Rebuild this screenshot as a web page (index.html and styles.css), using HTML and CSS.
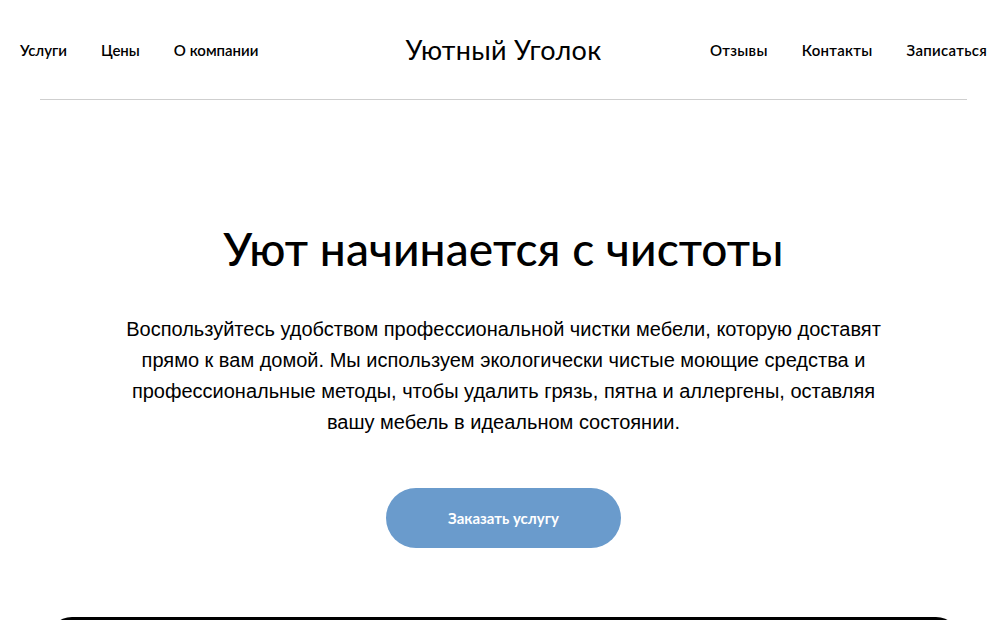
FILE: index.html
```html
<!DOCTYPE html>
<html lang="ru">

<head>
  <meta charset="UTF-8">
  <meta name="viewport" content="width=device-width, initial-scale=1.0">
  <title>Уютный Уголок | Чистка мебели</title>
  <link rel="stylesheet" href="styles.css">
</head>

<body>
  <div class="page">
    <header class="site-header">
      <nav class="nav nav-left">
        <a href="#services">Услуги</a>
        <a href="#prices">Цены</a>
        <a href="#about">О компании</a>
      </nav>
      <div class="logo">Уютный Уголок</div>
      <nav class="nav nav-right">
        <a href="#reviews">Отзывы</a>
        <a href="#contacts">Контакты</a>
        <a href="#booking">Записаться</a>
      </nav>
    </header>
    <hr class="divider">

    <section class="hero">
      <h1>Уют начинается с чистоты</h1>
      <p>Воспользуйтесь удобством профессиональной чистки мебели, которую доставят прямо к вам домой. Мы используем экологически чистые моющие средства и профессиональные методы, чтобы удалить грязь, пятна и аллергены, оставляя вашу мебель в идеальном состоянии.</p>
      <a href="#booking" class="order-btn">Заказать услугу</a>
    </section>

    <section class="dark-block"></section>
  </div>
</body>

</html>
```

FILE: styles.css
```css
body,
html {
  margin: 0;
  padding: 0;
  color: #000;
  background: #fff;
  overflow: hidden;
}

.page {
  width: 1007px;
  font-family: Lato, 'Noto Sans', sans-serif;
}

.site-header {
  height: 99px;
  padding: 0 20px;
  display: flex;
  justify-content: space-between;
  align-items: center;
  box-sizing: border-box;
}

.nav {
  display: flex;
  gap: 34px;
  width: 300px;
}

.nav-right {
  justify-content: flex-end;
}

.nav a {
  text-decoration: none;
  color: #000;
  font-size: 15px;
  font-weight: 600;
}

.nav-right a {
  letter-spacing: 0.3px;
}

.logo {
  font-size: 27px;
  font-weight: 400;
  letter-spacing: 0.3px;
}

.divider {
  margin: 0 40px;
  border: none;
  border-top: 1px solid #cfcfcf;
}

.hero {
  display: flex;
  flex-direction: column;
  align-items: center;
  padding-top: 121px;
  text-align: center;
}

.hero h1 {
  margin: 0;
  font-size: 46px;
  font-weight: 500;
  line-height: 56px;
  letter-spacing: 0.1px;
}

.hero p {
  width: 770px;
  margin: 37px 0 0;
  font-family: 'Liberation Sans', Arial, sans-serif;
  font-size: 20px;
  line-height: 31px;
}

.order-btn {
  margin-top: 50px;
  width: 235px;
  height: 60px;
  border-radius: 30px;
  background-color: #6a9bcc;
  color: #fff;
  text-decoration: none;
  font-size: 15px;
  font-weight: 700;
  display: flex;
  align-items: center;
  justify-content: center;
}

.dark-block {
  margin: 69px 47px 0 48px;
  height: 200px;
  border-radius: 24px;
  background-color: #000;
}
```
